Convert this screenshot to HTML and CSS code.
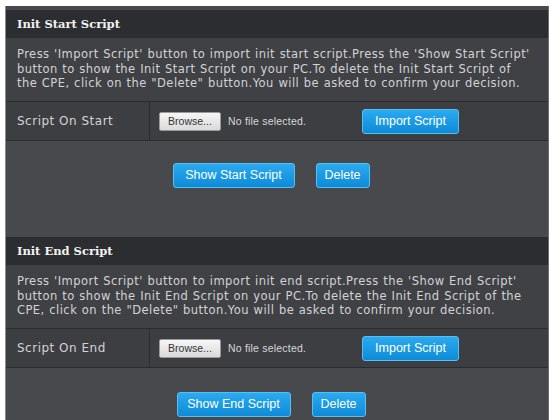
FILE: index.html
```html
<!DOCTYPE html>
<html>
<head>
<meta charset="utf-8">
<link rel="stylesheet" href="styles.css">
</head>
<body>
<div class="page">
  <div class="panel">
    <section class="block">
      <div class="head">Init Start Script</div>
      <div class="desc">Press 'Import Script' button to import init start script.Press the 'Show Start Script' button to show the Init Start Script on your PC.To delete the Init Start Script of the CPE, click on the "Delete" button.You will be asked to confirm your decision.</div>
      <div class="row">
        <div class="label">Script On Start</div>
        <div class="value">
          <div class="file"><span class="browse">Browse...</span><span class="nofile">No file selected.</span></div>
          <span class="btn btn-import">Import Script</span>
        </div>
      </div>
      <div class="actions first">
        <span class="btn btn-show">Show Start Script</span>
        <span class="btn btn-del">Delete</span>
      </div>
    </section>
    <section class="block">
      <div class="head">Init End Script</div>
      <div class="desc">Press 'Import Script' button to import init end script.Press the 'Show End Script' button to show the Init End Script on your PC.To delete the Init End Script of the CPE, click on the "Delete" button.You will be asked to confirm your decision.</div>
      <div class="row">
        <div class="label">Script On End</div>
        <div class="value">
          <div class="file"><span class="browse">Browse...</span><span class="nofile">No file selected.</span></div>
          <span class="btn btn-import">Import Script</span>
        </div>
      </div>
      <div class="actions last">
        <span class="btn btn-show2">Show End Script</span>
        <span class="btn btn-del">Delete</span>
      </div>
    </section>
  </div>
</div>
</body>
</html>
```
FILE: styles.css
```css
html, body {
  margin: 0;
  padding: 0;
  background: #ffffff;
}
.page {
  padding: 6px 5px 0 5px;
  height: 414px;
  box-sizing: content-box;
}
.panel {
  background: #47494d;
  border-left: 1px solid #8a8c90;
  border-right: 1px solid #6a6c70;
  height: 411px;
  padding-top: 4px;
  overflow: hidden;
  font-family: "DejaVu Sans", Verdana, sans-serif;
}
.block {
  display: flex;
  flex-direction: column;
}
.head {
  height: 28px;
  background: #2c2d31;
  color: #f2f2f2;
  font-family: "DejaVu Serif", Georgia, serif;
  font-weight: bold;
  font-size: 11.5px;
  line-height: 28px;
  padding-left: 11px;
}
.desc {
  background: #404145;
  color: #d2d3d5;
  font-size: 11.5px;
  letter-spacing: 0.45px;
  word-spacing: 0.5px;
  line-height: 14.5px;
  height: 63px;
  box-sizing: border-box;
  padding: 9px 16px 0 11px;
}
.row {
  display: grid;
  grid-template-columns: 144px 1fr;
  height: 40px;
  background: #3d3e42;
  border-top: 1px solid #2b2c2f;
  border-bottom: 1px solid #2b2c2f;
  box-sizing: border-box;
}
.label {
  border-right: 1px solid #2b2c2f;
  color: #d2d3d5;
  font-size: 12px;
  letter-spacing: 0.5px;
  padding-left: 11px;
  display: flex;
  align-items: center;
}
.value {
  display: flex;
  align-items: center;
  padding-left: 9px;
}
.file {
  width: 203px;
  display: flex;
  align-items: center;
}
.browse {
  display: inline-block;
  width: 62px;
  height: 19px;
  box-sizing: border-box;
  background: linear-gradient(#f6f6f6, #dadada);
  border: 1px solid #9a9a9a;
  color: #333;
  font-family: "Liberation Sans", Arial, sans-serif;
  font-size: 10.5px;
  line-height: 17px;
  text-align: center;
  border-radius: 2px;
}
.nofile {
  color: #d6d7d9;
  font-family: "Liberation Sans", Arial, sans-serif;
  font-size: 10.5px;
  letter-spacing: 0.2px;
  margin-left: 7px;
}
.btn {
  display: inline-block;
  box-sizing: border-box;
  height: 25px;
  line-height: 23px;
  text-align: center;
  color: #ffffff;
  font-family: "Liberation Sans", Arial, sans-serif;
  font-size: 12.5px;
  background: linear-gradient(#2aaaf0, #0e8bd8);
  border: 1px solid #58bff2;
  border-radius: 3px;
}
.btn-import { width: 97px; }
.btn-show { width: 122px; }
.btn-show2 { width: 114px; }
.btn-del { width: 54px; }
.actions {
  display: flex;
  justify-content: center;
  gap: 21px;
  padding-right: 12px;
  padding-top: 22px;
  box-sizing: border-box;
}
.actions.first { height: 96px; }
.actions.last { padding-top: 24px; }
```
